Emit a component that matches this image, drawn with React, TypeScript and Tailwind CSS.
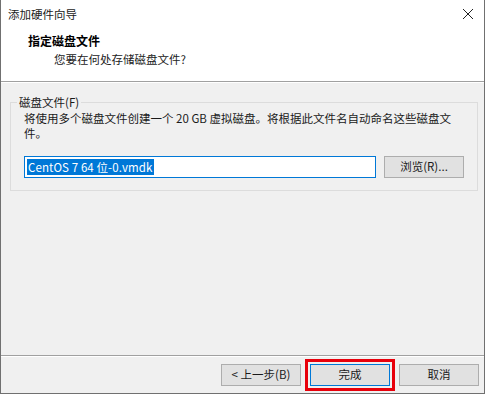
const font = { fontFamily: '"Noto Sans CJK SC", "Noto Sans", sans-serif' }

function Button({ label, primary }: { label: string; primary?: boolean }) {
  return (
    <div
      className={`w-[80px] h-[22px] shrink-0 flex items-center justify-center bg-[#e1e1e1] text-[11.5px] text-[#1a1a1a] border ${
        primary ? 'border-[#0078d7]' : 'border-[#adadad]'
      }`}
    >
      {label}
    </div>
  )
}

export default function App() {
  return (
    <div className="w-[488px] h-[396px] bg-white" style={font}>
      <div className="w-[485px] h-[394px] border-l border-r border-b border-[#707070] flex flex-col">
        {/* title bar + header */}
        <div className="bg-white h-[81px] flex flex-col">
          <div className="h-[30px] flex items-center justify-between pl-[7px] pr-[10px]">
            <span className="text-[11.5px] text-[#1a1a1a]">添加硬件向导</span>
            <svg width="12" height="12" viewBox="0 0 12 12" className="mt-[-2px]">
              <path d="M1 1 L11 11 M11 1 L1 11" stroke="#222" strokeWidth="1" />
            </svg>
          </div>
          <div className="pl-[27px] pt-[2px] text-[12px] font-bold text-black leading-[18px]">指定磁盘文件</div>
          <div className="pl-[53px] text-[11.5px] text-[#222] leading-[18px]">您要在何处存储磁盘文件?</div>
        </div>
        <div className="h-[1px] bg-[#a0a0a0]" />
        <div className="h-[1px] bg-white" />
        {/* body */}
        <div className="flex-1 bg-[#f0f0f0] flex flex-col">
          <div className="pl-[9px] pr-[6px] pt-[12px]">
            <div className="relative border border-[#dcdcdc] mt-[7px] h-[89px] pl-[13px] pr-[12px] pt-[8px]">
              <span className="absolute left-[6px] top-[-10px] px-[2px] bg-[#f0f0f0] text-[11.5px] text-[#1a1a1a] leading-[18px]">
                磁盘文件(F)
              </span>
              <div className="text-[11.5px] text-[#1a1a1a] leading-[15px]">
                将使用多个磁盘文件创建一个 20 GB 虚拟磁盘。将根据此文件名自动命名这些磁盘文
                <br />
                件。
              </div>
              <div className="flex items-center mt-[15px] gap-[8px]">
                <div className="w-[352px] shrink-0 h-[22px] bg-white border border-[#0078d7] flex items-center pl-[2px]">
                  <span className="bg-[#0078d7] text-white text-[11.5px] leading-[16px] px-[1px] tracking-[0.1px]">
                    CentOS 7 64 位-0.vmdk
                  </span>
                </div>
                <Button label="浏览(R)..." />
              </div>
            </div>
          </div>
          <div className="flex-1" />
          <div className="h-[1px] bg-[#a0a0a0]" />
          <div className="h-[1px] bg-white" />
          <div className="h-[36px] flex items-center justify-end pr-[5px] gap-[9px]">
            <Button label="< 上一步(B)" />
            <div className="border-[3px] border-[#e8000b] p-[2px] -mx-[5px]">
              <Button label="完成" primary />
            </div>
            <Button label="取消" />
          </div>
        </div>
      </div>
    </div>
  )
}
